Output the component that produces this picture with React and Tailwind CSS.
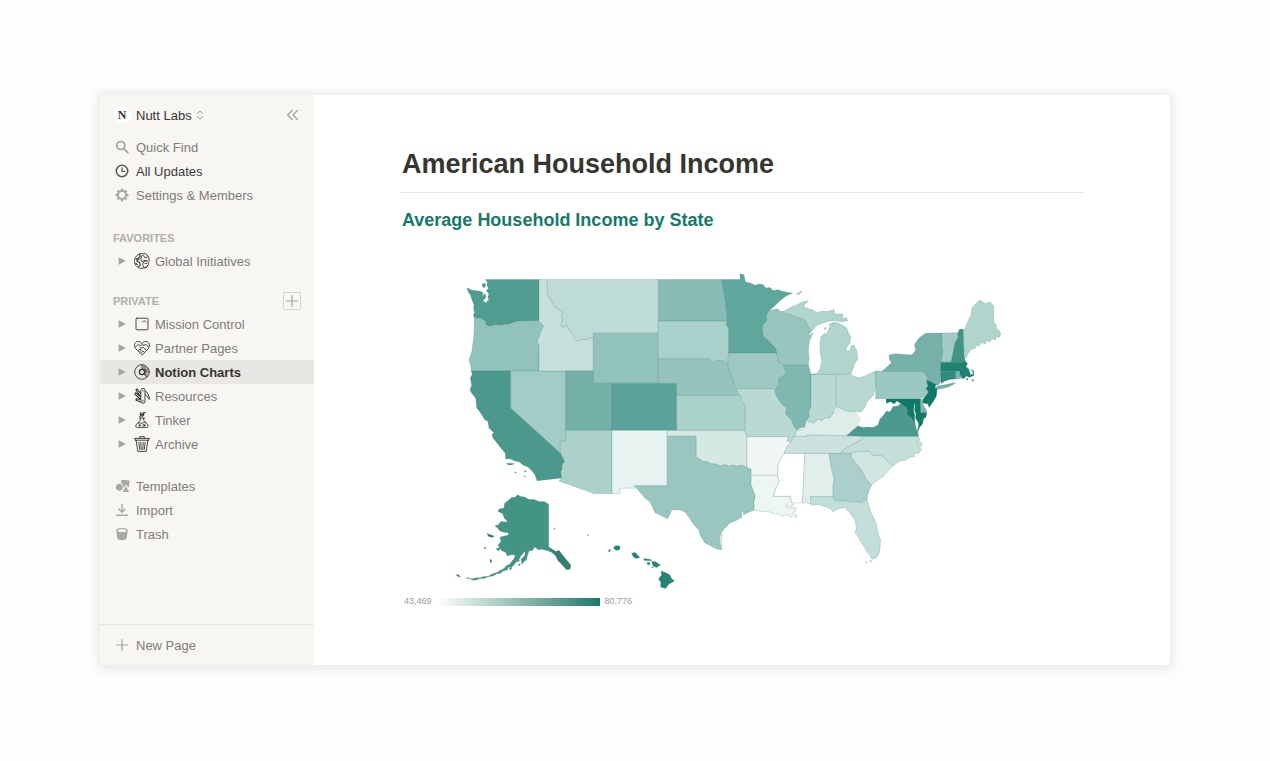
import { HiOutlineChevronDoubleLeft } from "react-icons/hi";

const STATES = [
  { id: "WA", fill: "#4f9d91", d: "M485.5 279.5H539V320.7L518 321L510 323.7L501.7 325L495 324.8L490 326.2L486 325L485.3 321L480 318.3L476 318L474 317L473.3 315L474.5 312.5L473.5 308L474 305L472 300L470.5 295L468.5 292.5L467 287.8L472 290.3L480 291.2L483 292.6L482.4 296L485 293.5L486 297L483 301L486.5 303L488 300L489.3 301L487.8 297L489 294L486.2 290.5L488.5 288.5L486.8 285L487.8 283Z" },
  { id: "WA-islands", fill: "#4f9d91", d: "M482 284L485 283.3L485.7 286L484 288L482.6 286.5Z" },
  { id: "OR", fill: "#91c2bb", d: "M474 317L476 318L480 318.3L485.3 321L486 325L490 326.2L495 324.8L501.7 325L510 323.7L518 321L539 320.7L541 323.5L543.7 325.7L540.3 332.5L539.5 336L537 341.7L539 345V371H471.3L470.8 366L469 360L471.7 351.7L473.7 338L474.3 325Z" },
  { id: "CA", fill: "#4b998c", d: "M471.3 371H510.7V408L560.5 453L565 461.7L562.5 464L561.8 470L560.7 472L562 478L537 480.7L535 475L532 471L528 467L523 465L519.5 462L515 461L510 458.8L505.7 459L505.2 453L501.7 449L497 443L493 438L492 435L493.7 432.5L489 428L488 421.5L484.5 419.5L483 416.7L480 412L476.7 408L475.8 398.5L472 393.5L470 390L471.7 385L470.3 378L472.3 374Z" },
  { id: "CA-islands", fill: "#4b998c", d: "M506.5 463.5L510 463.2L514.5 463.7L511 465L508 464.7ZM514.5 472L516.5 472.3L515.6 473.2ZM524 470.3L526.5 471L525.5 472.2ZM523.8 475.4L525.6 477L524.8 477.3Z" },
  { id: "NV", fill: "#a2ccc6", d: "M510.7 371H565.7V440.8L560.3 441V453L510.7 408Z" },
  { id: "ID", fill: "#c6dfdb", d: "M539 279.5H547.3V294L549.5 297L551 300.7L556 308L563 312L561.5 316L562.8 319L561 326L563.5 327.2L566.7 325L569 329.5L571.7 332.7L574 337L576.7 341L583 339L588 339.3L590 337.5L593.3 338V371H539V345L537 341.7L539.5 336L540.3 332.5L543.7 325.7L541 323.5L539 320.7Z" },
  { id: "MT", fill: "#bfdbd7", d: "M547.3 279.5H658.3V333.2H593.3V338L590 337.5L588 339.3L583 339L576.7 341L574 337L571.7 332.7L569 329.5L566.7 325L563.5 327.2L561 326L562.8 319L561.5 316L563 312L556 308L551 300.7L549.5 297L547.3 294Z" },
  { id: "WY", fill: "#92c2bc", d: "M593.3 333.2H658.3V383.3H593.3Z" },
  { id: "UT", fill: "#74afa8", d: "M565.7 371H593.3V383.3H612V430.4H565.7Z" },
  { id: "CO", fill: "#5ba39a", d: "M612 383.3H676.7V430.4H612Z" },
  { id: "AZ", fill: "#acd1cb", d: "M565.7 430.4H612V493.6H594L559 481L562 478L560.7 472L561.8 470L562.5 464L565 461.7L560.5 453L560.3 441L565.7 440.8Z" },
  { id: "NM", fill: "#e7f3f1", d: "M612 430.4H667.3V485.8H634.3L635 488.2H620V493.6H612Z" },
  { id: "ND", fill: "#87bcb6", d: "M658.3 279.5H721.7L723 288L724.3 295L725.5 302L726 308L727.3 321H658.3Z" },
  { id: "SD", fill: "#a9d1cc", d: "M658.3 321H727.3L726 325L728.7 328V353L727.7 364L724 361.5L720 360.7L716 361.2L713 361.7L708.3 358.8H658.3Z" },
  { id: "NE", fill: "#94c4bd", d: "M658.3 358.8H708.3L713 361.7L716 361.2L720 360.7L724 361.5L727.7 364L729 368L731 375L733 379L735.7 388.7L739.3 395.5H676.7V383.3H658.3Z" },
  { id: "KS", fill: "#abd1cb", d: "M676.7 395.5H739.3L741.5 396.5L741 400L745.3 405.7V430.4H676.7Z" },
  { id: "OK", fill: "#d5e8e4", d: "M667.3 430.4H745.3L747 437V467.7L741.7 465L737 466.5L733 465L729 466.3L725 464.6L720 466L715 463.8L711 464L707 461.5L703 461.7L700 459L696 458V436.3H667.3Z" },
  { id: "TX", fill: "#9ac6c0", d: "M667.3 436.3H696V458L700 459L703 461.7L707 461.5L711 464L715 463.8L720 466L725 464.6L729 466.3L733 465L737 466.5L741.7 465L747 467.7L751 469V485L753 490L755.3 495.7L754 502L754.3 510L748 512.5L743.5 515L743.6 511.5L741.5 512.5L742 517L737 520L733 521.7L729 523.5L726.7 526.7L724 529L721.5 532.5L719.5 538L719.8 543L722 549.7L716.7 549L711 546L705 543L702.5 539L700 535L699 530L695 526L691.7 521.7L689 517L685 512L680 509.8L671.7 510L670 514L667.7 518.7L662 516L655 512.7L652.5 507L650 501.7L645 498L639 491L634.3 485.8H667.3Z" },
  { id: "TX-coast", fill: "#ffffff", d: "M720.8 537L722 533.5L722.3 536L720.8 542L721.5 546Z" },
  { id: "MN", fill: "#5fa69c", d: "M721.7 279.5H740V274L742 274L744 275L745.3 281.7L751 283.3L755 285.3L759 284L763 284.5L766 288L770 287.5L773 290.5L778 289.7L783 291.5L792.7 293.3L786 296L780 300.7L774 306.5L769 311L766.7 315V321L762.5 325.5L763 336L769 341L775.7 348L777 353.2H728.7V328L726 325L727.3 321L726 308L725.5 302L724.3 295L723 288Z" },
  { id: "IA", fill: "#9dc9c2", d: "M728.7 353.2H777L778 360L780 363.5L783.5 365.5L786 371.7L784 375.5L779 378L778.5 385L775 390L773.5 388.7H736L733 379L731 375L729 368L727.7 364Z" },
  { id: "MO", fill: "#bbd9d3", d: "M736 388.7H773.5L775 391L776 395L781.7 404L786.7 408L785.5 414L791.7 420L794 426.7L797 430L795.5 435L793.7 436.5L791.7 441.7L786.7 441.3L788.5 436.7H747L745.3 430.4V405.7L741 400L741.5 396.5L739.3 395.5Z" },
  { id: "AR", fill: "#f1f7f6", d: "M747 436.7H788.5L786.7 441.3L791 442L787 446.7L784 453.3L780 460L778 465L777.7 475.3H751.5L751 469L747 467.7Z" },
  { id: "LA", fill: "#eef6f4", d: "M751.5 475.3H777.7L779.5 481.7L776 488L773.3 496.3H790.7L791.5 502.5L794 505L790 506.5L786 505L787 508L792 507.5L796 508L795.5 511L792.5 512.5L797 515L796.5 518L793 515.5L790 517.5L788 514.5L782 516.5L778 514L773 513.5L768 511.3L762 511.5L754.3 510L754 502L755.3 495.7L751.2 485Z" },
  { id: "MS", fill: "#ffffff", d: "M784 453.3H805L803.5 480L802.5 502.7L797 503L791.5 502.5L790.7 496.3H773.3L776 488L779.5 481.7L777.7 475.3L778 465L780 460Z" },
  { id: "AL", fill: "#e1eeeb", d: "M805 453.3H829L831.5 468L834.2 479L833 486L833.5 496.7H810.3L811 503L808 504L806.5 499.5L805 503L802.5 502.7L803.5 480Z" },
  { id: "GA", fill: "#abd0cb", d: "M829 453.3H851L850.7 456.5L857 464.5L861.7 470L866 479L871.7 485L869 491L867.7 495L867 500L862.8 499.8L862.5 502.3L835 500.5L833 496L833 486L834.2 479L831.5 468Z" },
  { id: "FL", fill: "#c2deda", d: "M810.3 496.7H833.5L835 500.5L862.5 502.3L862.8 499.8L867 500L868.5 505L870.7 511.7L875 521L876.7 525L878 533L880.5 540L880 548L879 554L876 558L871.5 559L870 555L867 552L864.5 547L860.5 541.5L858 536L855 533L856.3 528L855.2 520L850 513L845 507.5L839 508.5L833 511.7L830 508.5L826 507L819 504.5L811 505.2Z" },
  { id: "FL-keys", fill: "#c2deda", d: "M865.5 562.5L867 562L867 563ZM869.5 561L872 560.5L870.5 562Z" },
  { id: "SC", fill: "#d1e5e1", d: "M851 453.3L858 451L869.5 451.5L872.7 455L881.7 455.7L893 466L888 471L883 476.7L877 480.5L871.7 485L866 479L861.7 470L857 464.5L850.7 456.5Z" },
  { id: "NC", fill: "#c4deda", d: "M864.3 436.2H918.5L920 440.5L916 442L921.5 442.5L922 446L918 448L921.5 449L919 453L914 453.5L915 456.5L910 457L905 460.5L900 460.5L893 466L881.7 455.7L872.7 455L869.5 451.5L858 451L851 453.3H841L843 450L850 445.7L856 442.5L861 440Z" },
  { id: "TN", fill: "#cde2de", d: "M793.7 436.3L806.7 436.2L807 434.8L864.3 436.2L861 440L856 442.5L850 445.7L843 450L841 453.3H784L787 446.7L791 442Z" },
  { id: "KY", fill: "#dfedea", d: "M794.5 436.3L797 430L804 428.7L805.5 423.5L810 421.5L814 423L818 419L822 420.5L826 417.5L830 418L833 413L836.5 411L837.5 406.5L845 410.5L850 411.5L855 410.7L857 415L860.5 418L858 426L852 431L846.7 435.7L807 434.8L806.7 436.2Z" },
  { id: "WV", fill: "#ffffff", d: "M875.7 387V398.8H886L886.3 403.5L890.5 401.5L894 404L897 401L900.7 403.5L898 406L893 406.5L890 412L886.5 411L883 416L880 419L878 425L873 427.5L868 427L863 427.5L858 426L860.5 418L857 415L858 412L861.7 411.5L865 407L866.7 401.7L870 399L873.5 395Z" },
  { id: "IL", fill: "#7fb8b0", d: "M783 364.7H808.3L811 374.3V406.7L808.5 412L809.5 416.5L806 421L804.5 427L800 428L797 430L794 426.7L791.7 420L785.5 414L786.7 408L781.7 404L776 395L775 390L778.5 385L779 378L784 375.5L786 371.7L783.5 365.5Z" },
  { id: "IN", fill: "#b9d9d3", d: "M811 374.3L836.3 374.5L836.2 407L833 413L830 418L826 417.5L822 420.5L818 419L814 423L810 421.5L806 421L809.5 416.5L808.5 412L811 406.7Z" },
  { id: "OH", fill: "#b9d8d2", d: "M836.3 374.5L850.7 373.7L854 376.5L858 377.7L864 376.5L870 373.5L875.7 371V386.7L873.5 395L870 399L866.7 401.7L865 407L861.7 411.5L858 412L855 410.7L850 411.5L845 410.5L837.5 406.5L836.2 407Z" },
  { id: "WI", fill: "#99c5bf", d: "M769 311L773 309.7L778 308.7L779.5 311L782.5 311.5L786 313.5L791.7 315L797 317L803 319L806.5 321.5L807 325L810 328L810.5 331L808.5 336L813 333L809.5 341L808.3 350L809 358L808.3 364.7H783L780 363.5L778 360L777 353.2L775.7 348L769 341L763 336L762.5 325.5L766.7 321V315Z" },
  { id: "MI-upper", fill: "#b0d5cd", d: "M782.5 311.5L787 309.5L792 306.7L798 304.5L801.7 302L808.5 300.7L804 305L804.5 307.5L811.7 309.5L817 312.5L822 311.3L828 311.5L834 309.5L835 314L842.7 314V319L846 317.5L848 320.5L841.7 321.7L836 320.5L829 321L822 323.3L817 325.3L813 329.5L810.5 333L810 328L807 325L806.5 321.5L803 319L797 317L791.7 315L786 313.5Z" },
  { id: "MI-lower", fill: "#b0d5cd", d: "M811 374.3L816 374.3L820 369L821.8 361L820.2 352L820 344L821 337L825 333L825.5 336L828 331L830 326L829 324.5L835 322L841 324.5L846.7 328L848 332L850.7 336.7L850 343L846 348L846.7 352L850 350L851 346L854 345L857 351.7L857.7 359L854 365L852.5 370L850.7 373.7L836.3 374.5Z" },
  { id: "MI-isles", fill: "#b0d5cd", d: "M796 294.5L800 291.8L802.5 290.7L799.5 294ZM824 329L826 327L825.5 330ZM831 323.3L833 323L832 324.3Z" },
  { id: "PA", fill: "#9bc8c1", d: "M875.7 371L881.7 371.3H923.5L925.5 375L928 376.7L926.5 381L928 386L926 388.5L928.5 392L924 397L920 398.8H875.7Z" },
  { id: "NY", fill: "#75b0a9", d: "M881.7 371.3L887 367L891.7 362.5L889.5 360L889 355L895 353.7L905 354.5L911.7 355L915.7 350.5L914.5 344.5L919 338L925.5 333.3L942.3 333L942 344L943 352L941 362L940.7 381L939 384.5L936.5 385.5L928 380.5L926.5 381L928 376.7L925.5 375L923.5 371.3Z" },
  { id: "NY-island", fill: "#75b0a9", d: "M935.5 388L938 386L945 384.7L951 383.5L954 381.8L952 384L956 383L949 386.7L942 388.5L936 389.5Z" },
  { id: "VT", fill: "#a2cbc6", d: "M942.3 333L957.7 332.7L958.3 337L954.5 344L953.5 351L951 362H941L943 352L942 344Z" },
  { id: "NH", fill: "#419587", d: "M957.7 333L959.5 329.3L963.3 329L964 355L965.3 361L962 362.3H951L953.5 351L954.5 344L958.3 337Z" },
  { id: "ME", fill: "#b0d5cd", d: "M963.7 331L966 326.5L968 321L971 315L972 308L975 304.5L979 300.7L981 300.5L985 303.8L990 302L993.7 306V322L996.5 325.5L996 328L1000 331.5L1000.5 334.5L999 337.5L995.5 336L996 340L992 338.5L990 342L986.7 340.5L985 344L981 342.5L979 346.5L976.7 345L975 348.5L972 348.5L968 353.5L966 358.5L964 355Z" },
  { id: "MA", fill: "#208273", d: "M941 362.3H962L965.3 361L967.5 363.5L966 366.5L969 369.5L970.5 374.5L973 374.3L972.7 371.5L971 369.5L973.5 370.5L974 375.5L969 377.5L967 376L963 379L960 374.7V371.3H940.7Z" },
  { id: "MA-islands", fill: "#208273", d: "M965.5 379L968 378.5L968 380ZM971.5 380L974 379.5L973 381.3Z" },
  { id: "CT", fill: "#318a7c", d: "M940.7 371.3H955.7V379L950 379.5L945 381L941 383.5Z" },
  { id: "RI", fill: "#7cb5ae", d: "M955.7 371.3H960V374.7L962 378L956 379Z" },
  { id: "NJ", fill: "#127a6a", d: "M928 380.5L936 384.5L935 387.5L937 389L936.5 396L933 402L929 407.5L928 404L922.5 403L922.8 399.5L928.5 392L926 388.5L928 386L926.5 381Z" },
  { id: "DE", fill: "#7fb7b0", d: "M920 399L922.5 399.5L923 405L926 409L926.8 412.8H920.7Z" },
  { id: "VA", fill: "#4b9a8d", d: "M846.7 435.7L852 431L858 426L863 427.5L868 427L873 427.5L878 425L880 419L883 416L886.5 411L890 412L893 406.5L898 406L900.7 403.5L906 407L907.5 411L907 414.5L911.5 417L915 421L915.5 426L917.5 430L918.5 436.2L864.3 436.2Z" },
  { id: "MD", fill: "#107968", d: "M886 399H920L920.7 412.8H926.8L926 417L923.5 419L922.5 424L919.5 427.5L918 431.5L916.5 425L911 417L907 414.5L907.5 411L906 407L900.7 403.5L897 401L894 404L890.5 401.5L886.3 403.5Z" },
  { id: "bay", fill: "#ffffff", d: "M914 403L915.2 406L914.5 410L916 414L915.5 418L918.5 423L918.5 427L917 431L916 427L914.5 420L914.8 415L913.5 410L914.2 407Z" },
  { id: "AK", fill: "#449486", d: "M517.7 494.7L520.5 496.5L525 497L528 499.3L534 499.5L539 501.5L545 501.7L548.7 504.5V547.3L552 549L556 551.8L559 550.5L561.5 555L565 558.5L568 562L570.5 565L570 569L566.5 569.5L563.5 566L561 563L558 560.5L556 556L552 552.5L547 550.5L541.7 549.3L538 549.8L535 546.8L532.5 550.5L529 551L527.5 555L526.5 560L524 561.5L522 564.5L521 559.5L525 555L525 551L520.5 556.5L519 559.5L519.5 561L516 562L514 565L511 567.8L508.5 567L507 570L503 571L500 573.5L497 573.8L493 576L488 576.8L484 578.4L480 578.5L475 580.3L472 580L470 578.5L466 578.6L467.5 577.5L472 578.9L476 577.8L480 577.8L484 576.4L488 576.3L493 573.8L497 572.5L500 570.5L504 568.5L506 566L510 564L512 561L514 558.5L515.5 555.5L512 554.5L507 556L506 552.5L501.5 550.5L498 545L501 541.5L500 537L505.5 535.7L508.5 535L508 532.5L505 532.5L500 531L497.5 528L495 526L498.5 524.5L501 521.5L507 522L506.5 520L504.5 518.5L502.5 513.5L498 511.5L499 509L504 508L504.5 503.5L508 500.5L511.7 497.5L515 497.3Z" },
  { id: "AK-islands", fill: "#347f72", d: "M487 533.5L490 534.5L494 536L493 537.5L488.5 536.5ZM496 549L500 547.5L499 551ZM484 547L486.5 548L485 549ZM490.5 559L492 561L491 563L489.8 561ZM456 574.5L459 575L460.5 577L457.5 576.2ZM508.5 569L512 567.5L511 569.5ZM518.5 564L520.5 564L519 566Z" },
  { id: "AK-panhandle", fill: "#347f72", d: "M549 548L556 551.8L559 550.5L570.5 565L570 569L566.5 569.5L558 560.5L556 556Z" },
  { id: "HI", fill: "#248576", d: "M608 551L611 548.8L609.5 552ZM613.5 548L615 546L618 545.5L620.3 547L619.5 549.8L616 550.5ZM631.5 553.5L635 552.3L637.5 555L640 557.5L636 558.5L633.5 557ZM643.5 558.5L651 559.5L651.5 560.8L644.5 560.5ZM647 562.5L650 562.3L649.5 565L647.5 564.5ZM651.5 561.5L655.5 561.8L660.5 565L656.5 567.5L653 566ZM651.5 567L653.5 567L652.5 568.2ZM661 571L665.5 572.5L670 575L671.5 578.5L674.5 581L669 584L665.5 588.5L660.5 587L660.8 582L658.5 579L661.5 575Z" },
  { id: "HI-leeward", fill: "#8f9f9b", d: "M554 528.3H555V529.3H554ZM587.5 534.7H588.5V535.7H587.5Z" },
];

function Sketch({ children }) {
  return (
    <svg
      viewBox="0 0 16 16"
      className="size-4 shrink-0 text-[#37352f]"
      fill="none"
      stroke="currentColor"
      strokeWidth="0.9"
      strokeLinecap="round"
      strokeLinejoin="round"
      aria-hidden="true"
    >
      {children}
    </svg>
  );
}

const GlobeIcon = () => (
  <Sketch>
    <path d="M5.5 1A7.4 7.4 0 1 0 13.8 12.3M6.5 .7H11.5L14.6 3.5L15.3 8" />
    <path d="M5.5 1L6.3 3.5L4.6 4.6L4.9 6.5L2.5 5.6M3 8.5L5.5 9.2L6.3 12L4.8 13.7M2 6.7L3.8 7.4M1.8 10.5L3.5 11.5" strokeWidth="1.1" />
    <path d="M8 2.5C6.5 4.5 6.6 7.2 8 8.8L10 7.4L13 7.8M9.5 2.3L10.6 4.6L13.5 4" />
    <path d="M9.2 9.7a2.8 2.8 0 1 1 4.5 3L12 15L9.8 14.4L8.8 12.3Z" />
    <path d="M11 10.4h2" />
  </Sketch>
);

const WindowIcon = () => (
  <Sketch>
    <rect x="2" y="2.2" width="12" height="11.6" rx="1" />
    <path d="M8.7 6C9.3 4.4 11.2 4.3 12 6" />
  </Sketch>
);

const HeartIcon = () => (
  <Sketch>
    <path d="M8 14.8L1.9 8.7C-1 5 1 1.5 4.2 1.5C6 1.5 7.3 2.4 8 3.6C8.7 2.4 10 1.5 11.8 1.5C15 1.5 17 5 14.1 8.7Z" />
    <path d="M1.6 7L4 4.7L6.5 5.4L8.3 4.8L10 5.2L12.2 4.6L14.6 7M6 7.5L7.8 8.2L9.3 7.4L12.3 10.2M4.6 10.4L6.2 9L7.2 10L6 11.5M7.2 12.7L8.8 11L10 12" />
  </Sketch>
);

const ChartIcon = () => (
  <Sketch>
    <circle cx="8" cy="8" r="7.3" />
    <circle cx="8" cy="8" r="2.6" strokeWidth="1.3" />
    <path d="M8 1V5.5M10.3 7L14.2 4.8M10 10L12.6 12.8" />
    <path d="M9.3 1.8V5.5M10.5 2.2V5.8M11.7 3V5.6M11.7 7.2V11.2M13 6.3V11.7M10.7 7.5L14.5 7.8" strokeWidth="0.6" />
  </Sketch>
);

const KnifeIcon = () => (
  <Sketch>
    <path d="M6.8 2.4A2.1 2.1 0 0 1 11 2.4V13.2A2.1 2.1 0 0 1 6.8 13.2Z" />
    <path d="M6.6 5.5L3 .8L1.9 2L6.2 8M6.4 8.5L1.6 4.8L.9 6.3L6.4 11M6.4 11.5L2.4 10.7L1.9 12L6.5 14" strokeWidth="1.1" />
    <path d="M11.2 3.2L12.8 4L16 10.6L15 11.4L12.9 7.8L11.2 6.5" />
    <path d="M8.9 2.4V3.2M8.9 12.2V13.4" />
  </Sketch>
);

const FlaskIcon = () => (
  <Sketch>
    <path d="M5.5 6H10.5M6.3 6.2V8.3L1.9 13C1.2 14.8 2.2 15.4 3.5 15.4H12.5C14 15.4 14.6 14.4 13.9 13L9.7 8.3V6.2" />
    <path d="M4.2 11C6 10 7.3 12 8.8 11S10.8 10.5 12 11" />
    <circle cx="5.6" cy="13.3" r=".8" />
    <circle cx="10" cy="13.3" r="1" />
    <path d="M6 4.3L7.5 2.6L6.5.9M8 4.4L9.7 3L9 .9L11 .6M6.3 2.7H9.8" strokeWidth="1.2" />
  </Sketch>
);

const BinIcon = () => (
  <Sketch>
    <path d="M1 2.4H15M1.3 4.2H14.7M5.7 2.2V.7H10.3V2.2M1 2.4L1.3 4.2M15 2.4L14.7 4.2" />
    <path d="M2.2 4.5L3.7 15.4H12.3L13.8 4.5M4.8 6.2L5.7 13.5M6.8 6.2L7.2 13.5M9.2 6.2L8.8 13.5M11.2 6.2L10.3 13.5" />
  </Sketch>
);

const SearchIcon = () => (
  <svg viewBox="0 0 14 14" className="size-[14px] shrink-0" fill="none" stroke="#a9a8a4" strokeWidth="1.9" aria-hidden="true">
    <circle cx="5.8" cy="5.6" r="4" />
    <path d="M8.8 8.6L12.7 12.5" strokeLinecap="round" />
  </svg>
);

const ClockIcon = () => (
  <svg viewBox="0 0 14 14" className="size-[14px] shrink-0" fill="none" stroke="#5b5954" strokeWidth="1.6" aria-hidden="true">
    <circle cx="7" cy="7" r="5.7" />
    <path d="M7 3.5V7.4H10" strokeWidth="1.3" />
  </svg>
);

const GearIcon = () => (
  <svg viewBox="0 0 14 14" className="size-[14px] shrink-0" fill="none" stroke="#a9a8a4" aria-hidden="true">
    <circle cx="7" cy="7" r="4" strokeWidth="2" />
    <path d="M7 .6V3M7 11V13.4M.6 7H3M11 7H13.4M2.5 2.5L4.2 4.2M9.8 9.8L11.5 11.5M2.5 11.5L4.2 9.8M9.8 4.2L11.5 2.5" strokeWidth="2.3" />
  </svg>
);

const TemplatesIcon = () => (
  <svg viewBox="0 0 14 14" className="size-[14px] shrink-0 overflow-visible" fill="#a9a8a4" aria-hidden="true">
    <path d="M6.3.8L14.6 1.4L14 8L12.4 7.6L10.9 5.4L8.6 8.8L7.6 5.2L6.2 4.4Z" />
    <path d="M7.1 6.2A3.5 3.5 0 1 0 7 10.6L8 9.3Z" />
    <path d="M10.9 7L14.2 13H7.6Z" />
  </svg>
);

const ImportIcon = () => (
  <svg viewBox="0 0 14 14" className="size-[14px] shrink-0" fill="none" stroke="#a9a8a4" strokeWidth="1.4" aria-hidden="true">
    <path d="M7 1V9.2M3.6 5.8L7 9.2L10.4 5.8M1.2 12.3H12.8" />
  </svg>
);

const TrashIcon = () => (
  <svg viewBox="0 0 14 14" className="size-[14px] shrink-0" aria-hidden="true">
    <path d="M1.2 3.2C1.2.2 12.8.2 12.8 3.2L11.6 11.2C11.2 13.8 2.8 13.8 2.4 11.2Z" fill="#a9a8a4" />
    <ellipse cx="7" cy="3.5" rx="4.3" ry="1.5" fill="#f7f6f3" />
  </svg>
);

const PlusIcon = () => (
  <svg viewBox="0 0 14 14" className="size-[14px] shrink-0" stroke="#a3a29e" strokeWidth="1.2" aria-hidden="true">
    <path d="M7 1.2V12.8M1.2 7H12.8" />
  </svg>
);

const FAVORITES = [{ name: "Global Initiatives", Icon: GlobeIcon }];

const PRIVATE_PAGES = [
  { name: "Mission Control", Icon: WindowIcon },
  { name: "Partner Pages", Icon: HeartIcon },
  { name: "Notion Charts", Icon: ChartIcon, active: true },
  { name: "Resources", Icon: KnifeIcon },
  { name: "Tinker", Icon: FlaskIcon },
  { name: "Archive", Icon: BinIcon },
];

function NavButton({ Icon, label, dark }) {
  return (
    <button
      type="button"
      className={`flex h-6 w-full items-center gap-[7px] pl-[15px] ${dark ? "text-[#3f3d38]" : "text-[#7f7d78]"}`}
    >
      <Icon />
      <span className="pt-0.5">{label}</span>
    </button>
  );
}

function PageLink({ page }) {
  const { name, Icon, active } = page;
  return (
    <li>
      <a
        href="#"
        aria-current={active ? "page" : undefined}
        className={`flex h-6 items-center pl-[18px] ${active ? "bg-[#e8e7e4] font-bold text-[#37352f]" : "text-[#7f7d78]"}`}
      >
        <svg viewBox="0 0 8 8" className="mr-2 size-2 shrink-0" fill="#a3a29e" aria-hidden="true">
          <path d="M.6.3L7.8 4L.6 7.7Z" />
        </svg>
        <Icon />
        <span className="ml-[5px] pt-0.5">{name}</span>
      </a>
    </li>
  );
}

function Sidebar() {
  return (
    <nav className="flex w-[214px] shrink-0 flex-col bg-[#f7f6f3] text-[13px] leading-5">
      <div className="flex h-10 items-center justify-between pr-[13px] pl-[14px]">
        <button type="button" className="flex items-center text-[#37352f]">
          <span className="mr-[6px] flex size-4 items-center justify-center rounded-md bg-white font-['Liberation_Serif',serif] text-xs font-bold">
            N
          </span>
          <span className="pt-0.5">Nutt Labs</span>
          <svg viewBox="0 0 8 10" className="ml-1 h-[10px] w-2" fill="none" stroke="#9b9a96" aria-hidden="true">
            <path d="M1 3.8L4 .9L7 3.8M1 6.2L4 9.1L7 6.2" />
          </svg>
        </button>
        <button type="button" aria-label="Close sidebar" className="text-[#a3a29e]">
          <HiOutlineChevronDoubleLeft className="size-4" />
        </button>
      </div>
      <NavButton Icon={SearchIcon} label="Quick Find" />
      <NavButton Icon={ClockIcon} label="All Updates" dark />
      <NavButton Icon={GearIcon} label="Settings & Members" />

      <h2 className="mt-5 flex h-[22px] items-center px-[13px] text-[11px] font-bold text-[#b0afab]">FAVORITES</h2>
      <ul>
        {FAVORITES.map((page) => (
          <PageLink key={page.name} page={page} />
        ))}
      </ul>

      <div className="mt-[17px] flex h-[22px] items-center justify-between px-[13px]">
        <h2 className="text-[11px] font-bold text-[#b0afab]">PRIVATE</h2>
        <button
          type="button"
          aria-label="Add a page"
          className="flex size-[18px] items-center justify-center rounded-xs border border-[#d5d4d0]"
        >
          <PlusIcon />
        </button>
      </div>
      <ul>
        {PRIVATE_PAGES.map((page) => (
          <PageLink key={page.name} page={page} />
        ))}
      </ul>

      <div className="mt-[18px]">
        <NavButton Icon={TemplatesIcon} label="Templates" />
        <NavButton Icon={ImportIcon} label="Import" />
        <NavButton Icon={TrashIcon} label="Trash" />
      </div>

      <div className="mt-auto border-t border-[#e6e5e2] py-2">
        <NavButton Icon={PlusIcon} label="New Page" />
      </div>
    </nav>
  );
}

function IncomeMap() {
  return (
    <svg viewBox="400 240 684 350" className="mt-[6px] h-auto w-full" role="img" aria-label="Average household income by state">
      <g strokeWidth="0.6" strokeLinejoin="round" stroke="#2f7268" strokeOpacity="0.35">
        {STATES.map((state) => (
          <path key={state.id} d={state.d} fill={state.fill} strokeWidth={state.id === "WV" ? 0 : undefined} />
        ))}
      </g>
    </svg>
  );
}

export default function App() {
  return (
    <div className="flex min-h-screen bg-[#fefdfc] px-[100px] pt-[95px] pb-24 font-['Liberation_Sans',Arial,sans-serif]">
      <div className="flex min-w-0 flex-1 bg-white shadow-[0_1px_10px_2px_rgba(15,15,15,0.1)]">
        <Sidebar />
        <main className="min-w-0 flex-1 px-[86px] pt-[49px]">
          <h1 className="border-b border-[#e6e6e4] px-[2px] pb-2 text-[27px] leading-10 font-bold text-[#37352f]">
            American Household Income
          </h1>
          <h2 className="mt-[13px] px-[2px] text-lg leading-7 font-bold text-[#147a69]">
            Average Household Income by State
          </h2>
          <IncomeMap />
          <div className="mt-1 flex h-4 items-center gap-[5px] px-1 text-[9px] text-[#9b9b9b]">
            <span>43,469</span>
            <div className="h-2 w-[163px] bg-linear-to-r from-white to-[#127a6a]" />
            <span>80,776</span>
          </div>
        </main>
      </div>
    </div>
  );
}
